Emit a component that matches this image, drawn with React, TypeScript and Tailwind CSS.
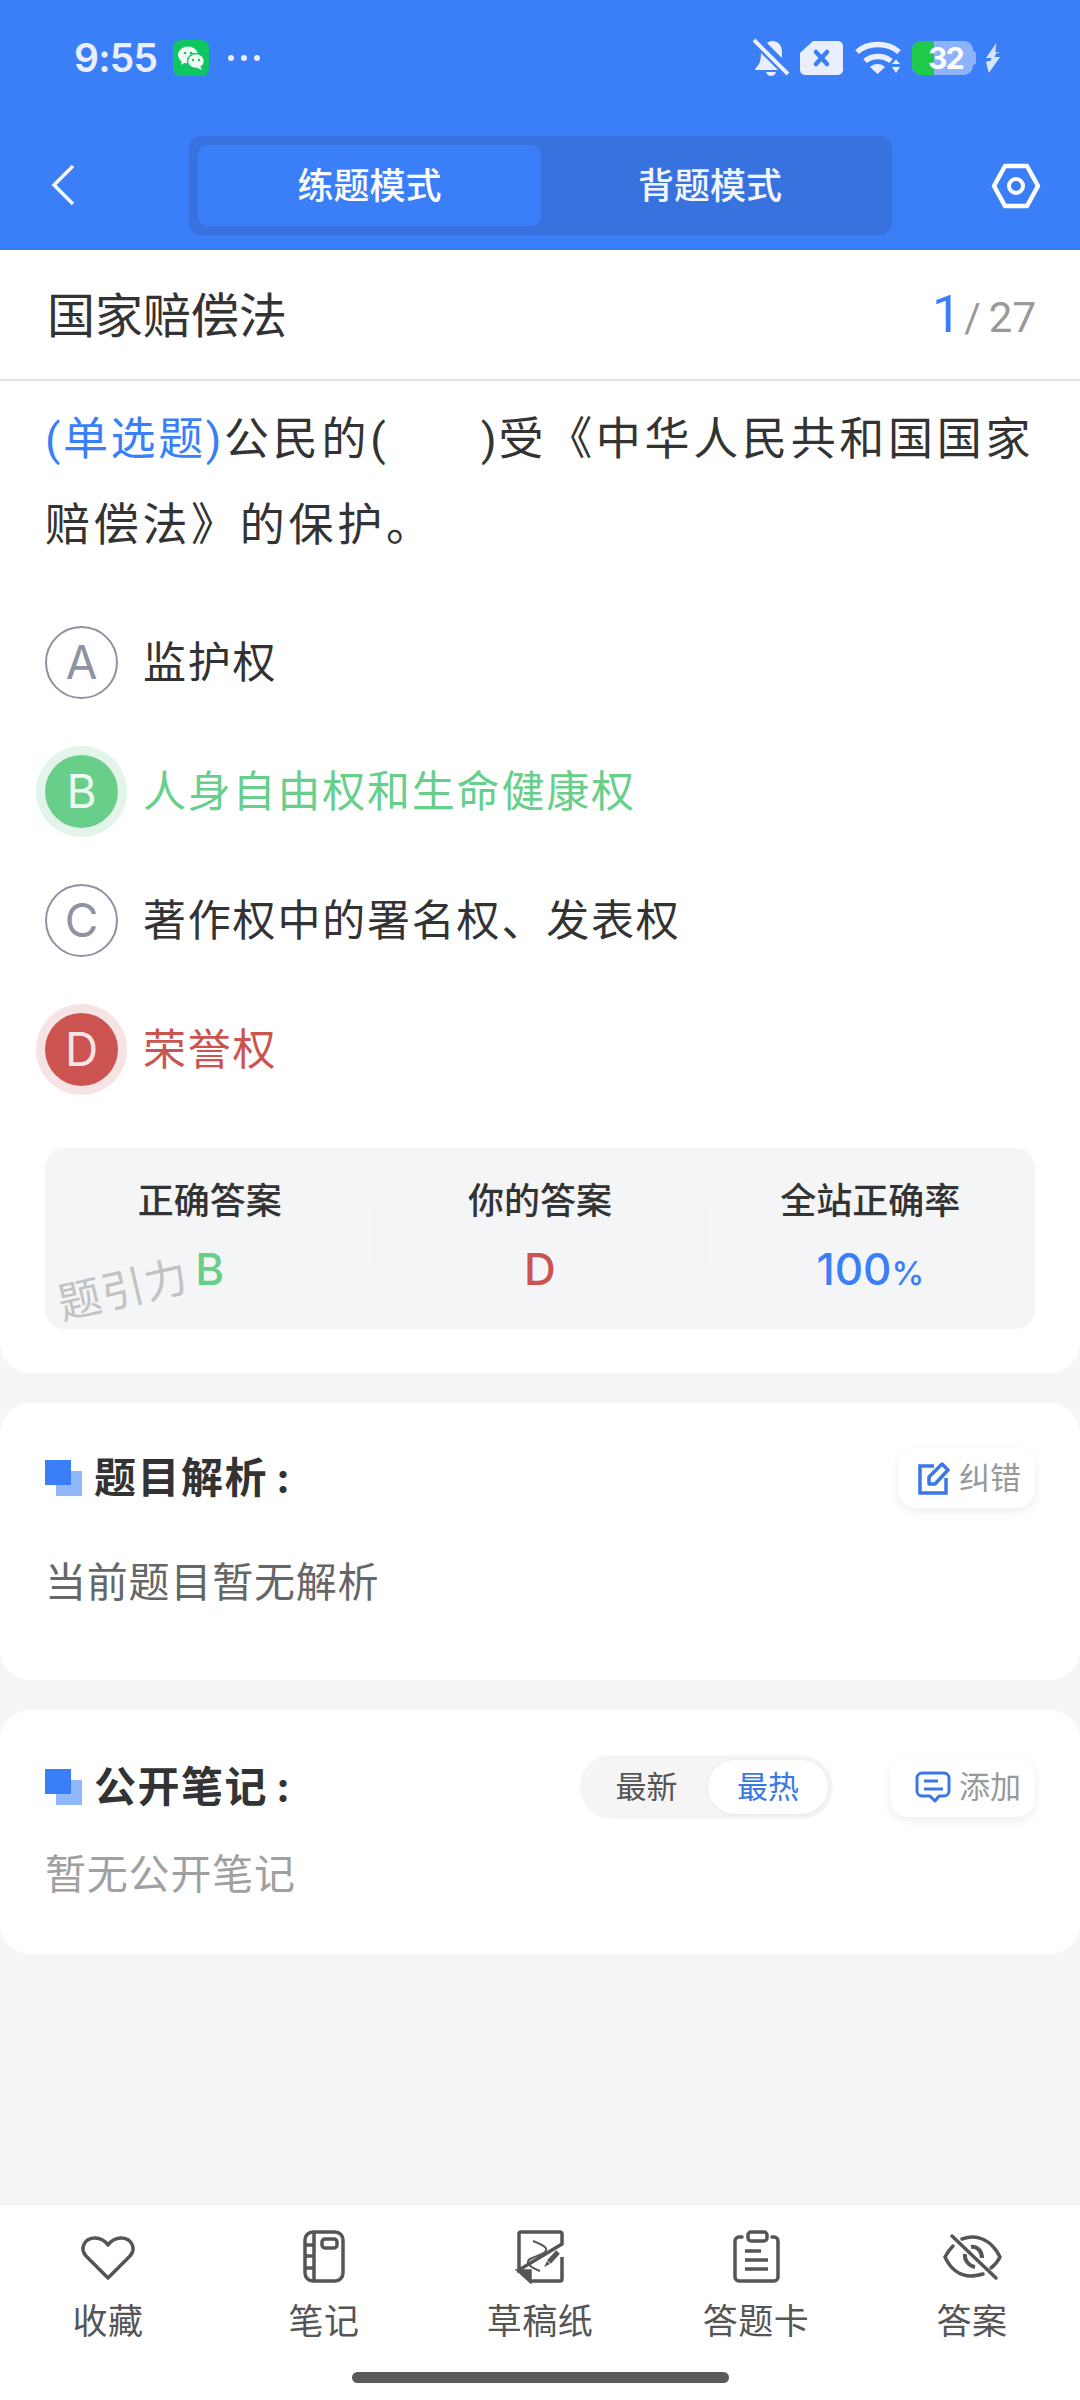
import type { ReactNode } from 'react';

const FONT = "font-['Inter','Noto_Sans_CJK_SC',sans-serif]";

function StatusBar() {
  return (
    <div className="h-[118px] flex items-start justify-between pl-[74px] pr-[78px] pt-[38px] text-[#e9effd]">
      <div className="flex items-center h-[40px]">
        <span className="text-[39px] leading-[40px] font-semibold tracking-[-0.8px] w-[83px]">9:55</span>
        <div className="ml-[16px] w-[36px] h-[36px] rounded-[8px] bg-[#0fc761] flex items-center justify-center">
          <svg width="28" height="26" viewBox="0 0 28 26">
            <ellipse cx="11" cy="10" rx="10" ry="8.5" fill="#f2fbf5" />
            <path d="M5 15l-1 5 5-3z" fill="#f2fbf5" />
            <ellipse cx="19" cy="16" rx="8.5" ry="7.5" fill="#f2fbf5" stroke="#0fc761" strokeWidth="1.5" />
            <path d="M23 21l2 4-5-2z" fill="#f2fbf5" />
            <circle cx="8" cy="8" r="1.3" fill="#0fc761" />
            <circle cx="14" cy="8" r="1.3" fill="#0fc761" />
            <circle cx="16" cy="15" r="1.2" fill="#0fc761" />
            <circle cx="22" cy="15" r="1.2" fill="#0fc761" />
          </svg>
        </div>
        <div className="ml-[19px] flex gap-[7px]">
          <span className="w-[6px] h-[6px] rounded-full bg-[#e9effd]" />
          <span className="w-[6px] h-[6px] rounded-full bg-[#e9effd]" />
          <span className="w-[6px] h-[6px] rounded-full bg-[#e9effd]" />
        </div>
      </div>
      <div className="flex items-center h-[40px]">
        <svg width="38" height="40" viewBox="0 0 38 40" fill="#e9effd">
          <path d="M20 3c7 0 10 5 10 11v6L15 5c1-1 3-2 5-2zM9 15l17 17H3c0-2 2-3 4-6 1-2 2-6 2-11zM14 34h10c-1 3-3 4-5 4s-4-1-5-4z" />
          <path d="M2 2l34 34" stroke="#e9effd" strokeWidth="4" />
          <path d="M6 1l32 32" stroke="#3b7ff8" strokeWidth="2.5" />
        </svg>
        <div className="ml-[10px] w-[43px] h-[34px]">
          <svg width="43" height="34" viewBox="0 0 43 34">
            <path d="M13 0h25a5 5 0 0 1 5 5v24a5 5 0 0 1-5 5H5a5 5 0 0 1-5-5V12z" fill="#e9effd" />
            <path d="M16 11l11 12M27 11L16 23" stroke="#3b7ff8" strokeWidth="4.5" strokeLinecap="round" />
          </svg>
        </div>
        <svg className="ml-[12px]" width="47" height="34" viewBox="0 0 47 34" fill="none">
          <path d="M2 11c11-10 31-10 42 0" stroke="#e9effd" strokeWidth="5.5" />
          <path d="M10 20c7-6 19-6 26 0" stroke="#e9effd" strokeWidth="5.5" />
          <path d="M15 26c4-4 11-4 15 0l-7.500 7z" fill="#e9effd" />
          <path d="M37 23l4-4.500 4 4.500zM37 26h8l-4 6z" fill="#e9effd" />
        </svg>
        <div className="ml-[10px] relative w-[61px] h-[34px] rounded-[9px] bg-[#8db3fb] overflow-hidden">
          <div className="w-[22px] h-full bg-[#1fc94a]" />
          <span className="absolute left-[16px] top-0 w-[30px] text-center text-[30px] leading-[34px] font-bold tracking-[-1.5px] text-white">32</span>
        </div>
        <span className="w-[3px] h-[14px] rounded-r-[3px] bg-[#8db3fb]" />
        <svg className="ml-[9px]" width="17" height="32" viewBox="0 0 18 32" fill="#d8e4fd">
          <path d="M12 0L1 16h6l-1 3-5 1h0l3 12 12-17h-6l2-4 5-1h-6z" />
        </svg>
      </div>
    </div>
  );
}

function Header() {
  return (
    <div className="h-[132px] flex items-start pt-[18px] relative">
      <svg className="ml-[50px] mt-[27px]" width="26" height="44" viewBox="0 0 26 44" fill="none">
        <path d="M23 3L4 22l19 19" stroke="#f4f7ff" strokeWidth="3.5" />
      </svg>
      <div className="ml-[113px] w-[703px] h-[99px] rounded-[12px] bg-[#3872de] p-[9px] flex">
        <div className="w-[343px] h-[81px] rounded-[10px] bg-[#3b7ff8] flex items-center justify-center text-[36px] font-medium text-white">练题模式</div>
        <div className="flex-1 flex items-center justify-center text-[36px] font-medium text-[#f2f5fd] pr-[4px]">背题模式</div>
      </div>
      <svg className="ml-[99px] mt-[27px]" width="50" height="46" viewBox="0 0 50 46" fill="none">
        <path d="M14 3h22l11 20-11 20H14L3 23z" stroke="#fff" strokeWidth="4.500" strokeLinejoin="round" />
        <circle cx="25" cy="23" r="7" stroke="#fff" strokeWidth="4" />
      </svg>
    </div>
  );
}

const OPTIONS = [
  { key: 'A', text: '监护权', state: 'idle' },
  { key: 'B', text: '人身自由权和生命健康权', state: 'right' },
  { key: 'C', text: '著作权中的署名权、发表权', state: 'idle' },
  { key: 'D', text: '荣誉权', state: 'wrong' },
];

function Option({ k, text, state }: { k: string; text: string; state: string }) {
  let circle = 'border-2 border-[#8f92a3] text-[#8f92a3] bg-white';
  let color = 'text-[#333333]';
  if (state === 'right') {
    circle = 'bg-[#68cf8b] text-[#eef9f2] shadow-[0_0_0_9px_#e3f5ea]';
    color = 'text-[#68cf8b]';
  }
  if (state === 'wrong') {
    circle = 'bg-[#cc5450] text-[#f8e6e6] shadow-[0_0_0_9px_#f6e3e3]';
    color = 'text-[#cc5450]';
  }
  return (
    <div className="h-[129px] flex items-center">
      <div className={`w-[73px] h-[73px] rounded-full flex items-center justify-center text-[46px] ${circle}`}>{k}</div>
      <div className={`ml-[25px] text-[43px] tracking-[1.8px] ${color}`}>{text}</div>
    </div>
  );
}

function Stat({ label, children }: { label: string; children: ReactNode }) {
  return (
    <div className="flex-1 flex flex-col items-center pt-[30px]">
      <div className="text-[36px] leading-[46px] font-medium text-[#333333]">{label}</div>
      <div className="mt-[22px] text-[44px] leading-[46px] font-medium">{children}</div>
    </div>
  );
}

function SectionTitle({ text }: { text: string }) {
  return (
    <div className="flex items-center">
      <div className="relative w-[37px] h-[36px]">
        <div className="absolute right-0 bottom-0 w-[26px] h-[25px] bg-[#8fb8fa]" />
        <div className="absolute left-0 top-0 w-[26px] h-[25px] bg-[#3b7ff8]" />
      </div>
      <div className="ml-[12px] text-[42px] leading-[50px] font-bold tracking-[1.5px] text-[#333333]">
        {text}
        <span className="ml-[8px]">:</span>
      </div>
    </div>
  );
}

function ActionButton({ icon, text, width }: { icon: ReactNode; text: string; width: string }) {
  return (
    <div className={`h-[60px] rounded-[18px] bg-white shadow-[0_3px_10px_rgba(0,0,0,0.08)] flex items-center justify-end pr-[14px] ${width}`}>
      {icon}
      <span className="ml-[8px] text-[31px] text-[#999999]">{text}</span>
    </div>
  );
}

const TABS: { label: string; icon: ReactNode }[] = [
  {
    label: '收藏',
    icon: <path d="M30 48L8 26C1 18 7 8 17 8c6 0 10 3 13 7 3-4 7-7 13-7 10 0 16 10 9 18z" strokeLinejoin="round" />,
  },
  {
    label: '笔记',
    icon: (
      <>
        <rect x="11" y="2" width="38" height="49" rx="8" />
        <path d="M20 2v49M11 15h9M11 26h9M11 38h9" />
        <rect x="28" y="9" width="15" height="9" rx="3" />
      </>
    ),
  },
  {
    label: '草稿纸',
    icon: (
      <>
        <path d="M21 51h29a2 2 0 0 0 2-2V27M52 14V4a2 2 0 0 0-2-2H11a2 2 0 0 0-2 2v36z" />
        <path d="M9 41h11v10z" fill="#555555" />
        <path d="M23 11c10 4 16 7 12 11-6 5-18 5-17 11 1 4 7 6 12 8" strokeWidth="2" />
        <path d="M39 32l9-10" strokeWidth="5" />
        <path d="M34 37l3-6 3 3z" fill="#555555" stroke="none" />
      </>
    ),
  },
  {
    label: '答题卡',
    icon: (
      <>
        <path d="M16 7h-3a4 4 0 0 0-4 4v36a4 4 0 0 0 4 4h35a4 4 0 0 0 4-4V11a4 4 0 0 0-4-4h-2" strokeLinecap="round" />
        <rect x="22" y="2" width="19" height="9" rx="3" />
        <path d="M19 21h16M19 30h23M19 39h23" />
      </>
    ),
  },
  {
    label: '答案',
    icon: (
      <>
        <path d="M11 16c-3 3-6 7-8 11 5 11 14 19 26 19 4 0 8-1 12-2" strokeLinecap="round" />
        <path d="M20 9c3-1 6-2 10-2 12 0 22 8 28 20-2 4-5 8-9 11" strokeLinecap="round" />
        <path d="M29 17c6-1 11 4 11 11" strokeWidth="4" />
        <path d="M23 24c-1 6 4 12 10 13" strokeWidth="4" />
        <path d="M10 6l44 42" strokeLinecap="round" />
      </>
    ),
  },
];

export default function App() {
  return (
    <div className={`w-[1080px] h-[2400px] flex flex-col bg-[#f4f5f7] overflow-hidden ${FONT}`}>
      <div className="bg-[#3b7ff8]">
        <StatusBar />
        <Header />
      </div>

      <div className="bg-white rounded-b-[30px] h-[1123px]">
        <div className="h-[131px] border-b-2 border-[#e2e2e2] flex items-center justify-between pl-[47px] pr-[44px]">
          <span className="text-[48px] leading-[70px] pt-[3px] text-[#333333]">国家赔偿法</span>
          <span className="flex items-baseline font-['Roboto',sans-serif] text-[#999999]">
            <span className="text-[52px] text-[#3b7ff8]">1</span>
            <span className="ml-[3px] text-[40px]">/</span>
            <span className="ml-[8px] text-[42px]">27</span>
          </span>
        </div>

        <div className="pl-[45px] pr-[38px]">
          <div className="pt-[16px] font-['Roboto','Noto_Sans_CJK_SC',sans-serif] text-[45px] leading-[86px] tracking-[3.7px] text-[#333333]">
            <span className="tracking-[2.6px] text-[#3b7ff8]">(单选题)</span>公民的<span className="tracking-[1.8px]">(　　)</span>受《中华人民共和国国家赔偿法》的保护。
          </div>

          <div className="mt-[29px]">
            {OPTIONS.map((o) => (
              <Option key={o.key} k={o.key} text={o.text} state={o.state} />
            ))}
          </div>

          <div className="relative mt-[34px] mr-[7px] h-[181px] rounded-[20px] bg-[#f4f5f7] flex">
            <Stat label="正确答案">
              <span className="text-[#68cf8b]">B</span>
            </Stat>
            <div className="w-px h-[60px] mt-[60px] bg-[#e9eaec]" />
            <Stat label="你的答案">
              <span className="text-[#cc5450]">D</span>
            </Stat>
            <div className="w-px h-[60px] mt-[60px] bg-[#e9eaec]" />
            <Stat label="全站正确率">
              <span className="text-[#3b7ff8]">100<span className="text-[33px]">%</span></span>
            </Stat>
            <span className="absolute left-[12px] top-[116px] -rotate-[13deg] text-[43px] leading-[50px] tracking-[1px] text-[#c2c2c4]">题引力</span>
          </div>
        </div>
      </div>

      <div className="mt-[30px] h-[277px] bg-white rounded-[30px] px-[45px] pt-[45px]">
        <div className="flex items-center justify-between h-[60px]">
          <SectionTitle text="题目解析" />
          <ActionButton
            width="w-[137px]"
            text="纠错"
            icon={
              <svg width="34" height="34" viewBox="0 0 34 34" fill="none" stroke="#3a78e6" strokeWidth="3.500">
                <path d="M17 5H3v27h26V17" />
                <path d="M12 23v-7L25 3l6 6-13 14z" strokeLinejoin="round" />
              </svg>
            }
          />
        </div>
        <div className="mt-[48px] text-[41px] leading-[52px] tracking-[0.8px] text-[#666666]">当前题目暂无解析</div>
      </div>

      <div className="mt-[30px] h-[244px] bg-white rounded-[30px] px-[45px] pt-[45px]">
        <div className="flex items-center justify-between h-[64px]">
          <SectionTitle text="公开笔记" />
          <div className="flex items-center">
            <div className="w-[253px] h-[64px] rounded-full bg-[#f5f5f5] flex items-center p-[5px] mr-[57px] text-[31px]">
              <span className="w-[123px] text-center text-[#555555]">最新</span>
              <span className="w-[120px] h-[54px] rounded-full bg-white shadow-[0_1px_4px_rgba(0,0,0,0.06)] text-center leading-[54px] text-[#3a78e6]">最热</span>
            </div>
            <ActionButton
              width="w-[145px]"
              text="添加"
              icon={
                <svg width="36" height="32" viewBox="0 0 36 32" fill="none" stroke="#3a78e6" strokeWidth="3">
                  <path d="M7 2h22a5 5 0 0 1 5 5v13a5 5 0 0 1-5 5h-5l-4 5-5-5H7a5 5 0 0 1-5-5V7a5 5 0 0 1 5-5z" strokeLinejoin="round" />
                  <path d="M9 10h14M9 18h19" />
                </svg>
              }
            />
          </div>
        </div>
        <div className="mt-[29px] text-[41px] leading-[52px] tracking-[0.8px] text-[#a0a0a0]">暂无公开笔记</div>
      </div>

      <div className="mt-auto h-[196px] bg-white border-t border-[#efefef] flex flex-col">
        <div className="flex pt-[25px]">
          {TABS.map((t) => (
            <div key={t.label} className="w-[216px] flex flex-col items-center">
              <svg width="60" height="54" viewBox="0 0 60 54" fill="none" stroke="#555555" strokeWidth="3.500">
                {t.icon}
              </svg>
              <span className="mt-[15px] text-[35px] leading-[44px] tracking-[0.5px] text-[#555555]">{t.label}</span>
            </div>
          ))}
        </div>
        <div className="mt-[29px] mx-auto w-[377px] h-[11px] rounded-full bg-[#5a5a5a]" />
      </div>
    </div>
  );
}
